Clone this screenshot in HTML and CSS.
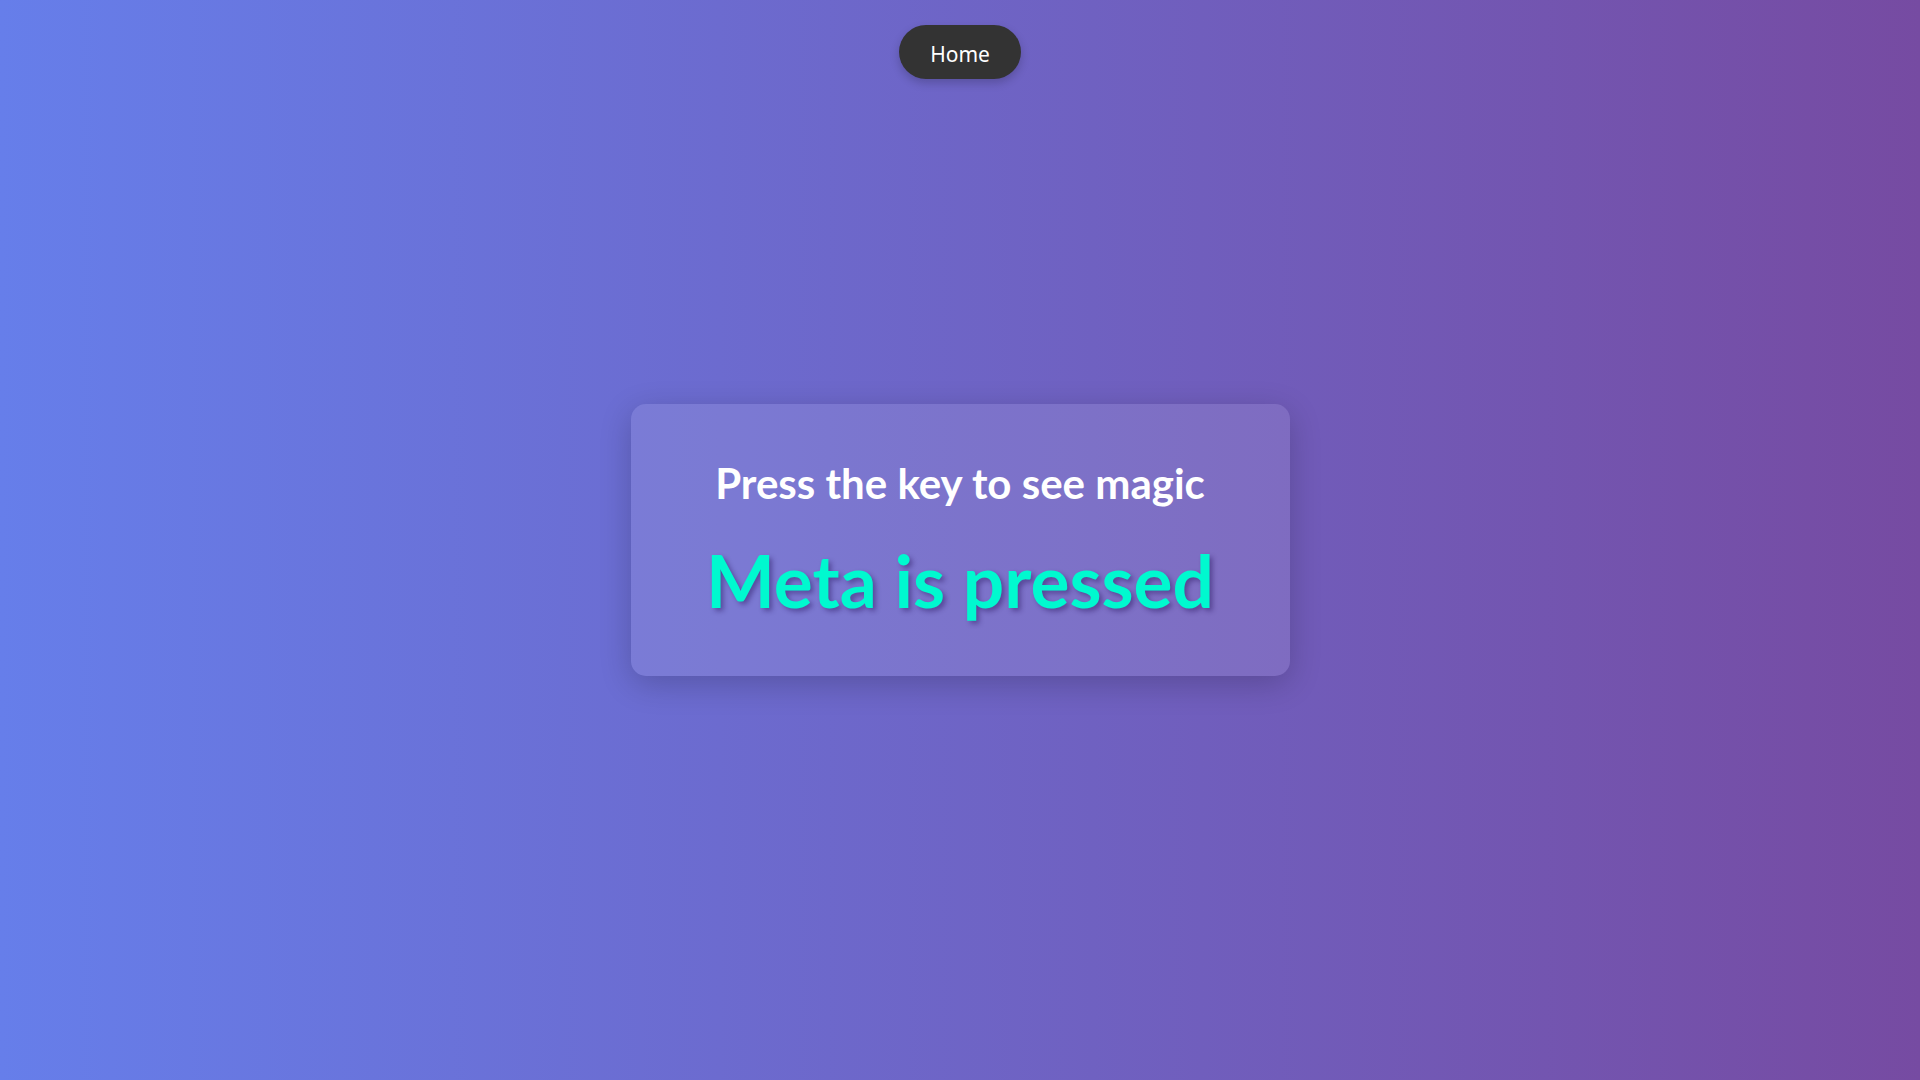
FILE: index.html
```html
<!DOCTYPE html>
<html lang="en">
<head>
<meta charset="utf-8">
<title>Key Magic</title>
<link rel="stylesheet" href="styles.css">
</head>
<body>
<nav class="nav">
  <a class="home-btn" href="#">Home</a>
</nav>
<main class="stage">
  <section class="card">
    <h1 class="title">Press the key to see magic</h1>
    <p class="result">Meta is pressed</p>
  </section>
</main>
</body>
</html>
```

FILE: styles.css
```css
* { box-sizing: border-box; }

html, body {
  margin: 0;
  padding: 0;
  height: 100%;
}

body {
  background: linear-gradient(to right, #667eea 0%, #764ba2 100%);
  font-family: "Segoe UI", Lato, "Noto Sans", sans-serif;
  color: #fff;
  overflow: hidden;
}

.nav {
  position: absolute;
  top: 25px;
  left: 0;
  right: 0;
  display: flex;
  justify-content: center;
}

.home-btn {
  display: block;
  width: 122px;
  height: 54px;
  padding-top: 4px;
  line-height: 50px;
  text-align: center;
  background: #333333;
  color: #fff;
  text-decoration: none;
  border-radius: 27px;
  font-family: "Noto Sans", sans-serif;
  font-size: 21px;
  box-shadow: 0 4px 10px rgba(0, 0, 0, 0.2);
}

.stage {
  height: 100vh;
  display: flex;
  align-items: center;
  justify-content: center;
}

.card {
  width: 659px;
  height: 272px;
  padding: 55px 10px 0;
  background: rgba(255, 255, 255, 0.1);
  border-radius: 15px;
  box-shadow: 0 8px 32px rgba(0, 0, 0, 0.2);
  text-align: center;
}

.title {
  margin: 0 0 30px;
  font-size: 42px;
  line-height: 48px;
  font-weight: 700;
  color: #fff;
}

.result {
  margin: 0;
  font-size: 73px;
  line-height: 86px;
  font-weight: 700;
  color: #00f9cf;
  text-shadow: 3px 3px 5px rgba(40, 20, 90, 0.45);
}
```
